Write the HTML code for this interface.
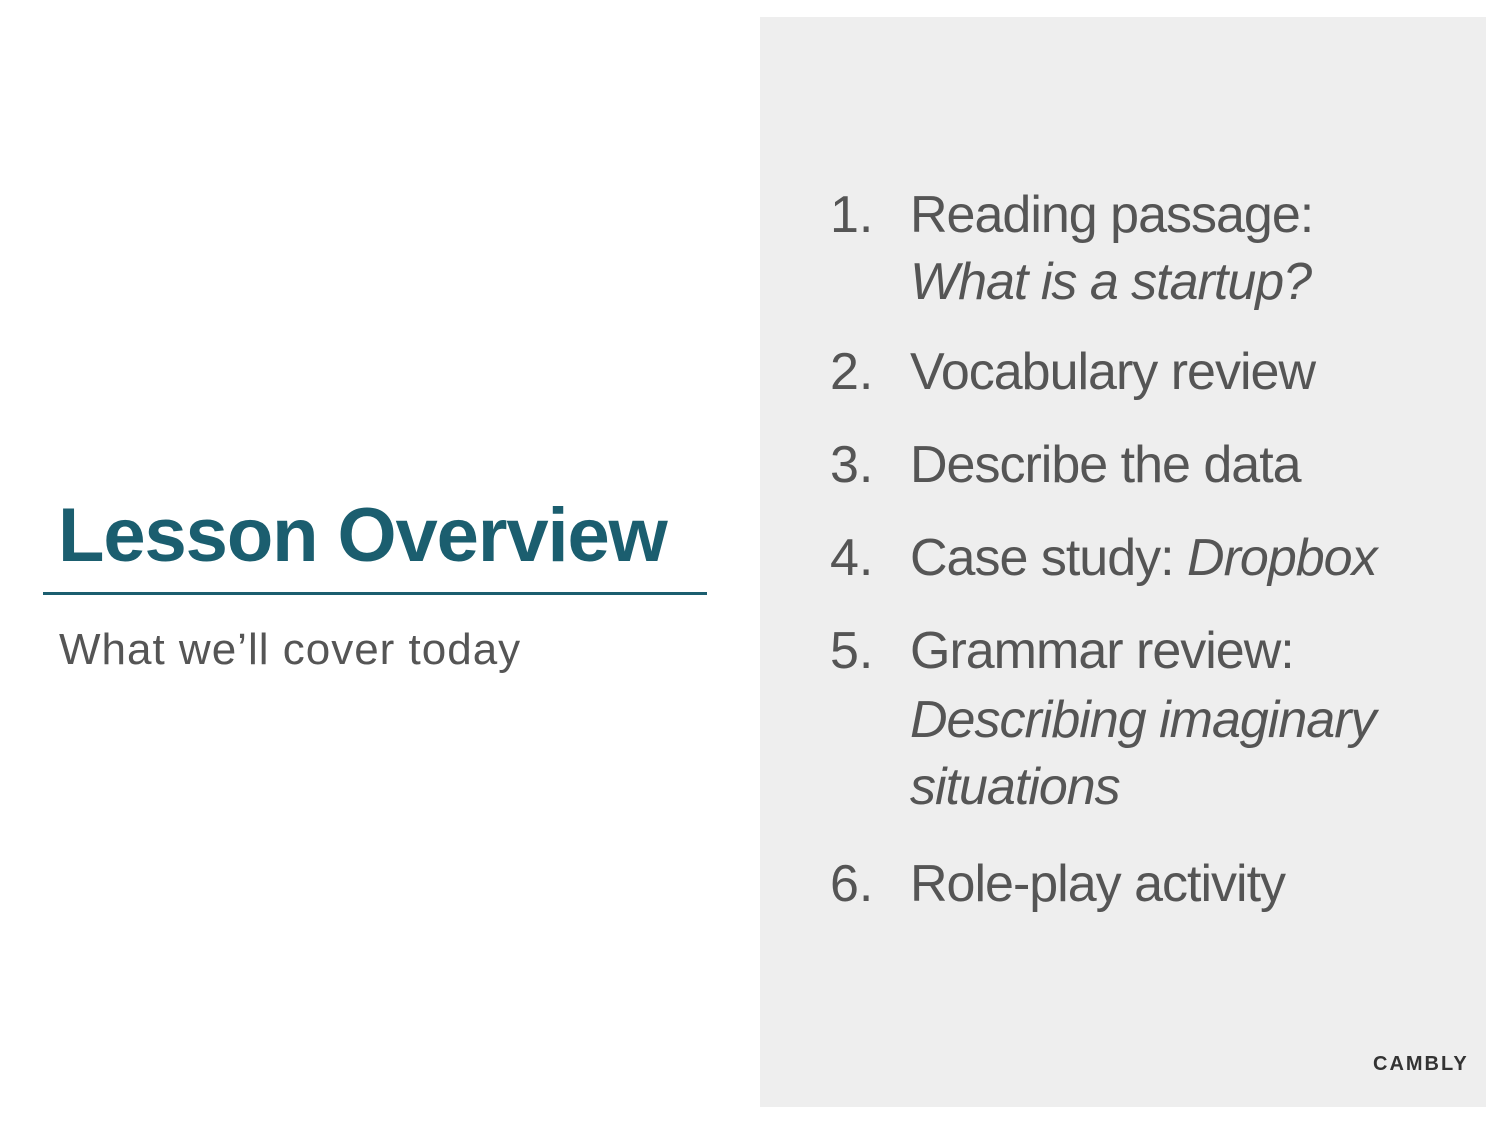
<!DOCTYPE html>
<html><head><meta charset="utf-8"><style>
html,body{margin:0;padding:0;background:#fff;}
body{width:1500px;height:1125px;position:relative;overflow:hidden;font-family:"Liberation Sans",Arial,sans-serif;}
.a{position:absolute;white-space:nowrap;line-height:1;}
.panel{position:absolute;left:760px;top:17px;width:726px;height:1090px;background:#eeeeee;}
.t{font-size:76px;font-weight:bold;color:#1b5e6f;left:58px;top:498px;letter-spacing:-1.1px;}
.rule{position:absolute;left:43px;top:592px;width:664px;height:3px;background:#1b5e6f;}
.s{font-size:44px;color:#555;left:59px;top:628px;letter-spacing:1px;}
.n,.l{font-size:52px;color:#555;}
.n{left:830px;}
.l{left:910px;letter-spacing:-1px;}
i{font-style:italic;}
.logo{position:absolute;left:1373px;top:1054px;font-size:20px;font-weight:bold;letter-spacing:2px;color:#333;line-height:1;}
</style></head><body>
<div class="panel"></div>
<div class="a t">Lesson Overview</div>
<div class="rule"></div>
<div class="a s">What we’ll cover today</div>

<div class="a n" style="top:189px">1.</div>
<div class="a l" style="top:189px">Reading passage:</div>
<div class="a l" style="top:256px"><i>What is a startup?</i></div>

<div class="a n" style="top:346px">2.</div>
<div class="a l" style="top:346px">Vocabulary review</div>

<div class="a n" style="top:439px">3.</div>
<div class="a l" style="top:439px">Describe the data</div>

<div class="a n" style="top:532px">4.</div>
<div class="a l" style="top:532px">Case study: <i>Dropbox</i></div>

<div class="a n" style="top:625px">5.</div>
<div class="a l" style="top:625px">Grammar review:</div>
<div class="a l" style="top:694px"><i>Describing imaginary</i></div>
<div class="a l" style="top:761px"><i>situations</i></div>

<div class="a n" style="top:858px">6.</div>
<div class="a l" style="top:858px">Role-play activity</div>

<div class="logo">CAMBLY</div>
</body></html>
